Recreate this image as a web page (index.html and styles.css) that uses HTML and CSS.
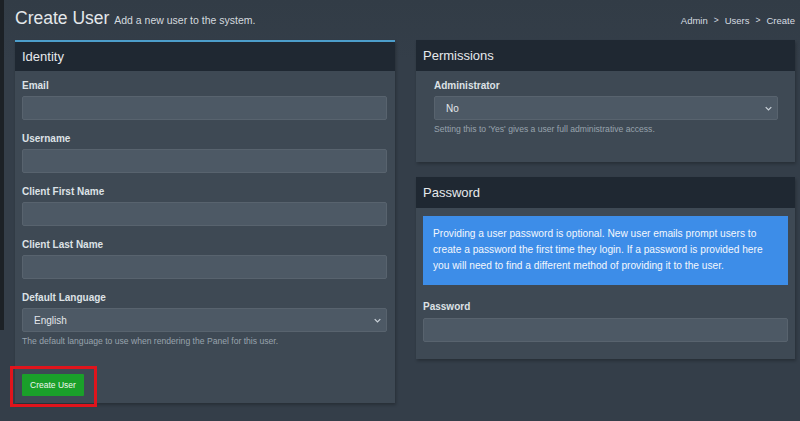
FILE: index.html
```html
<!DOCTYPE html>
<html lang="en">
<head>
    <meta charset="UTF-8">
    <meta name="viewport" content="width=device-width, initial-scale=1.0">
    <title>Create User</title>
    <link rel="stylesheet" href="styles.css">
</head>
<body>

<div class="layout">
    <div class="sidebar-edge"></div>

    <div class="content">
        <div class="page-header">
            <h1>Create User <small>Add a new user to the system.</small></h1>
            <ol class="breadcrumb">
                <li>Admin</li>
                <li class="sep">&gt;</li>
                <li>Users</li>
                <li class="sep">&gt;</li>
                <li>Create</li>
            </ol>
        </div>

        <form class="columns">
            <div class="box box-primary">
                <div class="box-header">Identity</div>
                <div class="box-body">
                    <div class="form-group">
                        <label for="email">Email</label>
                        <input type="text" id="email" name="email">
                    </div>
                    <div class="form-group">
                        <label for="username">Username</label>
                        <input type="text" id="username" name="username">
                    </div>
                    <div class="form-group">
                        <label for="name_first">Client First Name</label>
                        <input type="text" id="name_first" name="name_first">
                    </div>
                    <div class="form-group">
                        <label for="name_last">Client Last Name</label>
                        <input type="text" id="name_last" name="name_last">
                    </div>
                    <div class="form-group">
                        <label for="language">Default Language</label>
                        <div class="select-wrap">
                            <select id="language" name="language">
                                <option>English</option>
                            </select>
                            <svg class="chevron" viewBox="0 0 10 6"><path d="M1 1l4 4 4-4" fill="none" stroke="#c9d1d8" stroke-width="1.8"/></svg>
                        </div>
                        <p class="help">The default language to use when rendering the Panel for this user.</p>
                    </div>
                </div>
                <div class="box-footer">
                    <span class="highlight">
                        <button type="submit" class="btn-success">Create User</button>
                    </span>
                </div>
            </div>

            <div class="stack">
                <div class="box">
                    <div class="box-header">Permissions</div>
                    <div class="box-body wide">
                        <label for="root_admin">Administrator</label>
                        <div class="select-wrap">
                            <select id="root_admin" name="root_admin">
                                <option>No</option>
                                <option>Yes</option>
                            </select>
                            <svg class="chevron" viewBox="0 0 10 6"><path d="M1 1l4 4 4-4" fill="none" stroke="#c9d1d8" stroke-width="1.8"/></svg>
                        </div>
                        <p class="help">Setting this to 'Yes' gives a user full administrative access.</p>
                    </div>
                </div>

                <div class="box">
                    <div class="box-header">Password</div>
                    <div class="box-body pw">
                        <div class="callout">
                            Providing a user password is optional. New user emails prompt users to create a password the first time they login. If a password is provided here you will need to find a different method of providing it to the user.
                        </div>
                        <label for="password">Password</label>
                        <input type="password" id="password" name="password">
                    </div>
                </div>
            </div>
        </form>
    </div>
</div>

</body>
</html>
```

FILE: styles.css
```css
body {
    margin: 0;
    font-family: 'Liberation Sans', Arial, sans-serif;
    background-color: #343e49;
    color: #dfe3e7;
}
.layout {
    display: flex;
    align-items: flex-start;
}
.sidebar-edge {
    width: 4px;
    height: 330px;
    background-color: #1c2126;
    flex-shrink: 0;
}
.content {
    flex: 1;
    padding: 0 5px 0 11px;
    background: linear-gradient(#323c46, #343e49 60px);
    min-height: 421px;
}
.page-header {
    display: flex;
    justify-content: space-between;
    align-items: baseline;
    height: 40px;
    padding-top: 1px;
    box-sizing: border-box;
}
h1 {
    margin: 0;
    font-size: 17.5px;
    font-weight: normal;
    line-height: 34px;
    color: #e4e8eb;
}
h1 small {
    font-size: 10.5px;
    color: #d4dadf;
}
.breadcrumb {
    list-style: none;
    margin: 0;
    padding: 0;
    display: flex;
    gap: 6px;
    font-size: 9.5px;
    color: #d6dce1;
}
.breadcrumb .sep {
    font-size: 8.5px;
}
.columns {
    display: grid;
    grid-template-columns: 380px 379px;
    column-gap: 21px;
    align-items: start;
}
.stack {
    display: flex;
    flex-direction: column;
    gap: 15px;
}
.box {
    background-color: #3e4954;
    box-shadow: 1px 2px 3px rgba(0, 0, 0, 0.25);
}
.box-primary {
    border-top: 2px solid #4c9ecb;
}
.box-header {
    background-color: #1f2832;
    height: 31px;
    line-height: 31px;
    padding: 0 7px;
    font-size: 13px;
    color: #e6e9ec;
}
.box-primary .box-header {
    height: 29px;
    line-height: 29px;
}
.box-body {
    padding: 8px 8px 0 7px;
}
.box-body.wide {
    padding: 8px 17px 28px 18px;
}
.box-body.pw {
    padding: 8px 7px 17px 7px;
}
.form-group {
    margin-bottom: 12px;
}
.form-group:last-child {
    margin-bottom: 0;
}
label {
    display: block;
    font-size: 10px;
    font-weight: bold;
    line-height: 14px;
    margin-bottom: 3px;
    color: #dde2e6;
}
input, select {
    display: block;
    width: 100%;
    height: 24px;
    box-sizing: border-box;
    background-color: #4d5965;
    border: 1px solid #58636e;
    border-radius: 2px;
    color: #e3e7ea;
    font-family: inherit;
    font-size: 10px;
    padding: 0 11px;
    outline: none;
}
select {
    appearance: none;
    -webkit-appearance: none;
}
.select-wrap {
    position: relative;
}
.chevron {
    position: absolute;
    right: 6px;
    top: 10px;
    width: 7px;
    height: 5px;
}
.help {
    margin: 4px 0 0;
    font-size: 8.6px;
    color: #98a3ad;
}
.box-footer {
    padding: 28px 7px 7px;
}
.highlight {
    position: relative;
    display: inline-block;
}
.highlight::after {
    content: "";
    position: absolute;
    left: -12px;
    right: -13px;
    top: -8px;
    bottom: -11px;
    border: 3px solid #e0141c;
}
.btn-success {
    display: block;
    width: 62px;
    height: 22px;
    border: none;
    border-radius: 1px;
    background-color: #1aa02a;
    color: #eef6ee;
    font-family: inherit;
    font-size: 8.5px;
    padding: 0;
    cursor: pointer;
}
.callout {
    background-color: #3d8de8;
    color: #f3f7fd;
    font-size: 10.2px;
    line-height: 16px;
    padding: 10px 12px 11px 10px;
    margin-bottom: 15px;
}
.box-body.pw label {
    margin-bottom: 4px;
}
```
